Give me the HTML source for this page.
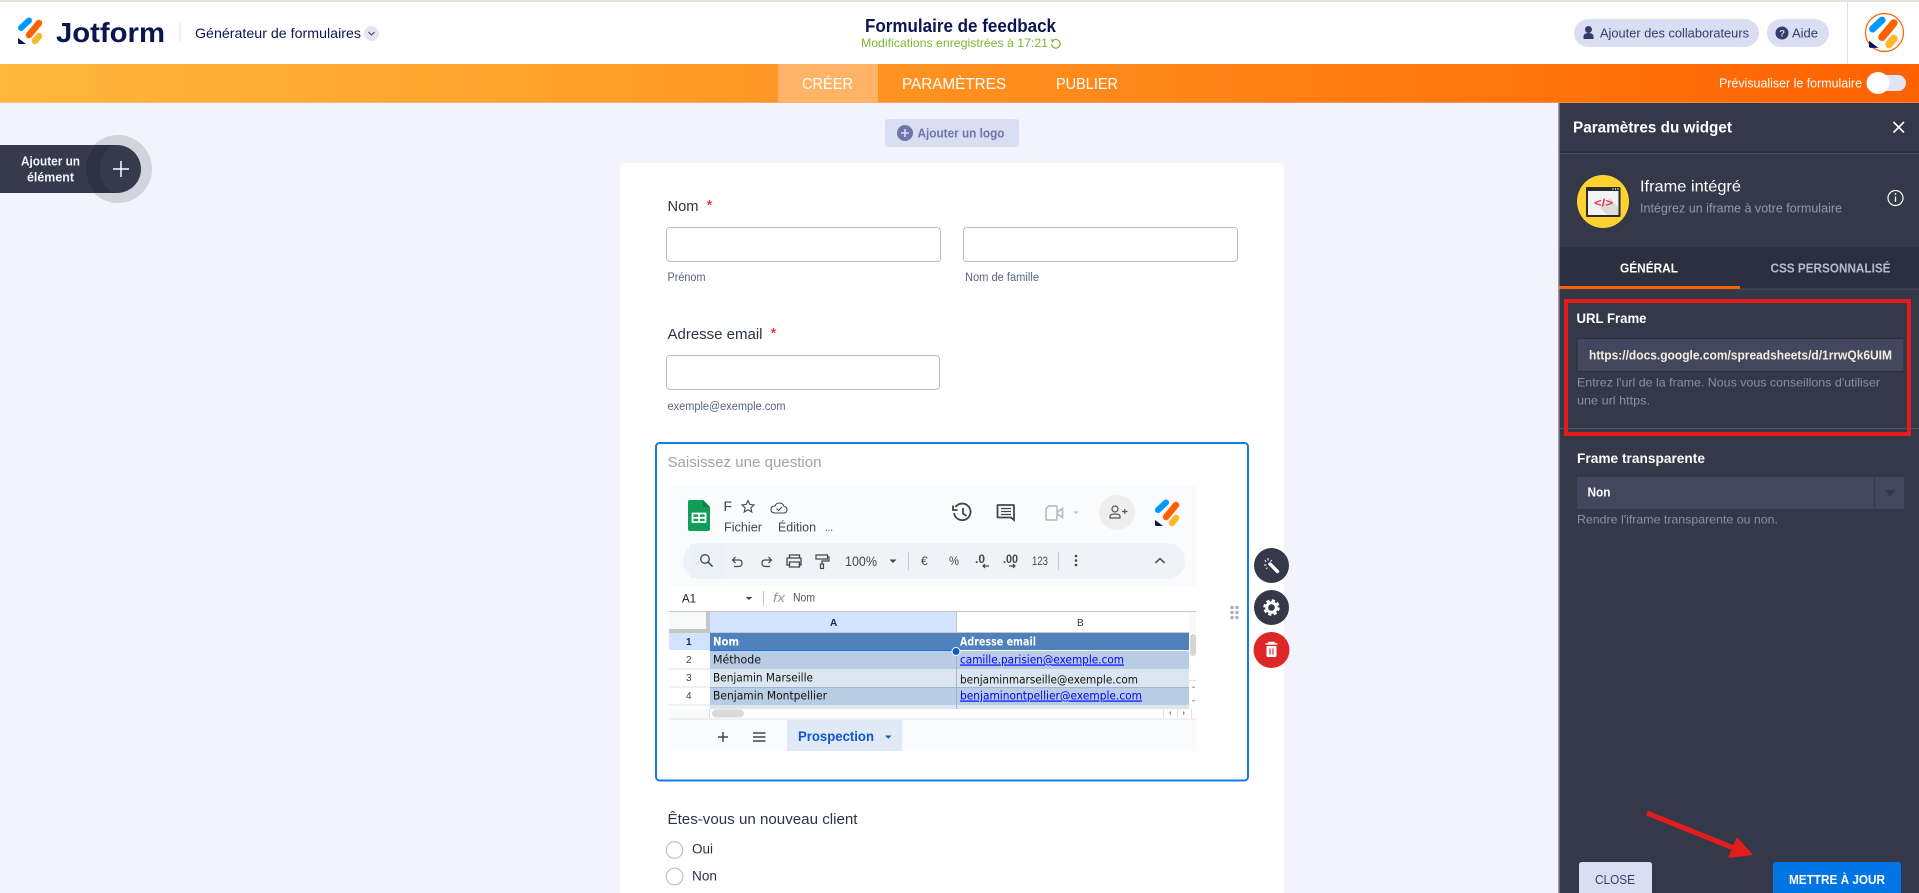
<!DOCTYPE html>
<html lang="fr">
<head>
<meta charset="utf-8">
<title>Formulaire de feedback</title>
<style>
html,body{margin:0;padding:0;width:1919px;height:893px;overflow:hidden;background:#f3f3fe}
svg{display:block;position:absolute;left:0;top:0}
text{font-family:"Liberation Sans",sans-serif;white-space:pre}
text.c{font-family:"DejaVu Sans","Liberation Sans",sans-serif}
</style>
</head>
<body>
<svg width="1919" height="893" viewBox="0 0 1919 893" xmlns="http://www.w3.org/2000/svg">
<defs>
<linearGradient id="og" x1="0" y1="0" x2="1" y2="0">
<stop offset="0" stop-color="#ffb73e"/><stop offset=".5" stop-color="#ff9020"/><stop offset="1" stop-color="#ff6100"/>
</linearGradient>
<g id="logo" fill="none" stroke-linecap="round" stroke-width="6.500">
<path d="M3 11L11 3.500" stroke="#0099ff" stroke-width="6"/>
<path d="M11 18L21 6" stroke="#ff6100"/>
<path d="M17 24L21 19" stroke="#ffb629"/>
<path d="M0 21L8 27H1.500Q0 27 0 25.500Z" fill="#0a1551" stroke="none"/>
</g>
</defs>

<!-- page -->
<rect width="1919" height="893" fill="#f3f3fe"/>

<!-- header -->
<rect width="1919" height="64" fill="#fff"/>
<rect width="1919" height="2" fill="#e8e4dc"/>
<use href="#logo" x="18" y="17"/>
<text x="56" y="42" font-size="27.500" font-weight="700" fill="#0a1551" textLength="109" lengthAdjust="spacingAndGlyphs">Jotform</text>
<rect x="179.500" y="23" width="1" height="18" fill="#dadef3"/>
<text x="195" y="38" font-size="14" fill="#0a1551" textLength="166" lengthAdjust="spacingAndGlyphs">Générateur de formulaires</text>
<circle cx="371.500" cy="33.500" r="7.500" fill="#e3e5f5"/>
<path d="M368.500 32l3 3 3-3" fill="none" stroke="#343c6a" stroke-width="1"/>

<text x="865" y="32" font-size="18" font-weight="700" fill="#0a1551" textLength="191" lengthAdjust="spacingAndGlyphs">Formulaire de feedback</text>
<text x="861" y="47" font-size="12" fill="#7ab72d" textLength="187" lengthAdjust="spacingAndGlyphs">Modifications enregistrées à 17:21</text>
<path d="M1053 40.500a4.300 4.300 0 1 1-1.500 3.500M1051 39.500l2 1.200-1 2" fill="none" stroke="#7ab72d" stroke-width="1.200"/>

<rect x="1574" y="19" width="185" height="28" rx="14" fill="#dadef3"/>
<circle cx="1588.500" cy="29.500" r="3.500" fill="#343c6a"/>
<path d="M1583.500 39v-2.500q0-3.500 5-3.500t5 3.500V39z" fill="#343c6a"/>
<text x="1600" y="37.500" font-size="13" fill="#343c6a" textLength="149" lengthAdjust="spacingAndGlyphs">Ajouter des collaborateurs</text>
<rect x="1767" y="19" width="62" height="28" rx="14" fill="#dadef3"/>
<circle cx="1782" cy="33" r="6.500" fill="#343c6a"/>
<text x="1779.300" y="36.500" font-size="9.500" font-weight="700" fill="#dadef3">?</text>
<text x="1792" y="37.500" font-size="13" fill="#343c6a" textLength="26" lengthAdjust="spacingAndGlyphs">Aide</text>
<rect x="1847" y="2" width="1" height="62" fill="#dadef3"/>
<ellipse cx="1884.500" cy="32.500" rx="19" ry="19" fill="#fff" stroke="#ff6100" stroke-width="1.200"/>
<g transform="translate(1869 16) scale(1.180 1.180)"><use href="#logo"/></g>

<!-- nav -->
<rect y="64" width="1919" height="39" fill="url(#og)"/>
<rect y="102" width="1919" height="1" fill="#fff" opacity=".2"/>
<rect x="778" y="64" width="100" height="39" fill="#ffb366"/>
<text x="802" y="89" font-size="16" fill="#fff" textLength="51" lengthAdjust="spacingAndGlyphs">CRÉER</text>
<text x="902" y="89" font-size="16" fill="#fff" textLength="104" lengthAdjust="spacingAndGlyphs">PARAMÈTRES</text>
<text x="1056" y="89" font-size="16" fill="#fff" textLength="62" lengthAdjust="spacingAndGlyphs">PUBLIER</text>
<text x="1719" y="87.500" font-size="13" fill="#fff" textLength="143" lengthAdjust="spacingAndGlyphs">Prévisualiser le formulaire</text>
<rect x="1868" y="75" width="38" height="16" rx="8" fill="#e3e5f5"/>
<ellipse cx="1878" cy="83" rx="11.500" ry="11" fill="#fff"/>

<!-- add element -->
<circle cx="118" cy="169" r="34" fill="#d2d3dc"/>
<path d="M0 145H117a24 24 0 0 1 24 24v0a24 24 0 0 1-24 24H0z" fill="#363a4d"/>
<path d="M96 145A34 34 0 0 0 96 193H117A17 24 0 0 1 117 145z" fill="#2f3242"/>
<text x="21" y="165.500" font-size="12.500" font-weight="700" fill="#f3f3fe" textLength="59" lengthAdjust="spacingAndGlyphs">Ajouter un</text>
<text x="27" y="181.500" font-size="12.500" font-weight="700" fill="#f3f3fe" textLength="47" lengthAdjust="spacingAndGlyphs">élément</text>
<path d="M121 161v16M113 169h16" stroke="#fff" stroke-width="1.500"/>

<!-- add logo -->
<rect x="885" y="119" width="134" height="28" rx="3" fill="#dadef3"/>
<circle cx="905" cy="133" r="8" fill="#6f76a7"/>
<path d="M905 129v8M901 133h8" stroke="#dadef3" stroke-width="1.600"/>
<text x="917.500" y="137.500" font-size="13" font-weight="700" fill="#6f76a7" textLength="87" lengthAdjust="spacingAndGlyphs">Ajouter un logo</text>

<!-- form card -->
<path d="M620 893V167q0-4 4-4H1280q4 0 4 4V893z" fill="#fff"/>
<text x="667.500" y="211" font-size="15" fill="#2c3345" textLength="31" lengthAdjust="spacingAndGlyphs">Nom</text>
<text x="706.500" y="210" font-size="15" fill="#f00">*</text>
<rect x="666.500" y="227.500" width="274" height="34" rx="3.500" fill="#fff" stroke="#b8bdc9"/>
<rect x="963.500" y="227.500" width="274" height="34" rx="3.500" fill="#fff" stroke="#b8bdc9"/>
<text x="667.500" y="281" font-size="11.500" fill="#57647e" textLength="38" lengthAdjust="spacingAndGlyphs">Prénom</text>
<text x="965" y="281" font-size="11.500" fill="#57647e" textLength="74" lengthAdjust="spacingAndGlyphs">Nom de famille</text>
<text x="667.500" y="339" font-size="15" fill="#2c3345" textLength="95" lengthAdjust="spacingAndGlyphs">Adresse email</text>
<text x="770.500" y="338" font-size="15" fill="#f00">*</text>
<rect x="666.500" y="355.500" width="273" height="34" rx="3.500" fill="#fff" stroke="#b8bdc9"/>
<text x="667.500" y="410" font-size="11.500" fill="#57647e" textLength="118" lengthAdjust="spacingAndGlyphs">exemple@exemple.com</text>

<!-- selected widget -->
<rect x="656" y="443" width="592" height="337.500" rx="3.500" fill="#fff" stroke="#0f7fe8" stroke-width="2"/>
<text x="667.500" y="467" font-size="15" fill="#a0a3ad" textLength="154" lengthAdjust="spacingAndGlyphs">Saisissez une question</text>

<!-- embedded sheet -->
<rect x="669" y="486" width="527" height="100" fill="#f9fbfd"/>
<path d="M690 500h13l7 7v22q0 2-2 2h-18q-2 0-2-2v-27q0-2 2-2z" fill="#0f9d58"/>
<path d="M703 500l7 7h-7z" fill="#0a7d45"/>
<path d="M692.500 513.500h13v8.500h-13zM699 513.500v8.500M692.500 517.800h13" fill="none" stroke="#fff" stroke-width="1.800"/>
<text x="723.500" y="511" font-size="14" fill="#444746">F</text>
<path d="M748 500.500l1.800 3.900 4.200.5-3.100 2.900.9 4.200-3.800-2.200-3.800 2.200.9-4.200-3.100-2.900 4.200-.5z" fill="none" stroke="#444746" stroke-width="1.100"/>
<path d="M775 513q-4 0-4-3.500t4-3.500q1-3 4.500-3t4.500 3.500q3 .5 3 3.200t-3 3.300z" fill="none" stroke="#444746" stroke-width="1.100"/>
<path d="M776.500 508.500l2 2 3.500-3.500" fill="none" stroke="#444746" stroke-width="1"/>
<text x="724" y="531.500" font-size="13" fill="#444746" textLength="38" lengthAdjust="spacingAndGlyphs">Fichier</text>
<text x="778" y="531.500" font-size="13" fill="#444746" textLength="38" lengthAdjust="spacingAndGlyphs">Édition</text>
<text x="825" y="531" font-size="12" fill="#444746" textLength="8" lengthAdjust="spacingAndGlyphs">...</text>

<path d="M955.500 507a8.300 8.300 0 1 1-1.500 6" fill="none" stroke="#444746" stroke-width="1.800"/>
<path d="M953 505.500v4.500h4.500" fill="none" stroke="#444746" stroke-width="1.800"/>
<path d="M963 508v5.500l3.500 2.500" fill="none" stroke="#444746" stroke-width="1.800"/>
<path d="M998 505h15.500q.5 0 .5 .5V520l-3-2.500H998q-.5 0-.5-.5V505.500q0-.5 .5-.5z" fill="none" stroke="#444746" stroke-width="1.800"/>
<path d="M1001 508.500h10M1001 511.500h10M1001 514.500h10" stroke="#444746" stroke-width="1.200"/>
<path d="M1048.500 506h7.500q1 0 1 1v12q0 1-1 1H1047q-1 0-1-1v-10zM1057.500 512l5-3.500v9l-5-3.500" fill="none" stroke="#bdbdbd" stroke-width="1.700"/>
<path d="M1073.500 511.500h5l-2.500 2.500z" fill="#bdbdbd"/>
<ellipse cx="1117" cy="512.500" rx="18" ry="17.500" fill="#eeeeee"/>
<circle cx="1115" cy="509" r="3" fill="none" stroke="#555" stroke-width="1.200"/>
<path d="M1110 518v-1.500q0-2.500 5-2.500t5 2.500v1.500z" fill="none" stroke="#555" stroke-width="1.200"/>
<path d="M1122 511.500h5.500M1124.800 509v5" stroke="#555" stroke-width="1.200"/>
<use href="#logo" x="1155" y="499"/>

<rect x="683" y="543" width="502" height="36" rx="18" fill="#eff2f8"/>
<rect x="690" y="544" width="34" height="34" fill="#ecf0f8"/>
<circle cx="705" cy="559" r="4.300" fill="none" stroke="#444746" stroke-width="1.300"/>
<path d="M708 562l4.500 4.500" stroke="#444746" stroke-width="1.500"/>
<path d="M733 560h6q3 0 3 3t-3 3.500h-5M735.500 557l-3 3 3 3" fill="none" stroke="#444746" stroke-width="1.200"/>
<path d="M771 560h-6q-3 0-3 3t3 3.500h5M768.500 557l3 3-3 3" fill="none" stroke="#444746" stroke-width="1.200"/>
<path d="M789.500 558v-3h10v3M789.500 565h-2.500v-6.500q0-.5.5-.5h13q.5 0 .5.5v6.500h-2.500M789.500 562h10v5h-10z" fill="none" stroke="#444746" stroke-width="1.300"/>
<path d="M816 555h11.500v4H816zM827.500 557h1.500v4h-7v3" fill="none" stroke="#444746" stroke-width="1.200"/>
<rect x="820.500" y="564" width="3" height="4.500" fill="none" stroke="#444746" stroke-width="1.200"/>
<text x="845" y="566" font-size="13.500" fill="#444746" textLength="32" lengthAdjust="spacingAndGlyphs">100%</text>
<path d="M889.500 559.500h7l-3.500 3.500z" fill="#444746"/>
<rect x="908" y="552" width="1" height="18" fill="#c7c9cc"/>
<text x="921" y="565" font-size="12" fill="#444746">€</text>
<text x="949" y="565" font-size="12" fill="#444746" textLength="10" lengthAdjust="spacingAndGlyphs">%</text>
<text x="975" y="563" font-size="11.500" font-weight="700" fill="#444746" textLength="10" lengthAdjust="spacingAndGlyphs">.0</text>
<path d="M989 566h-6M985 564l-2 2 2 2" fill="none" stroke="#444746" stroke-width="1.200"/>
<text x="1003" y="563" font-size="11.500" font-weight="700" fill="#444746" textLength="15" lengthAdjust="spacingAndGlyphs">.00</text>
<path d="M1009 566h6M1013 564l2 2-2 2" fill="none" stroke="#444746" stroke-width="1.200"/>
<text x="1032" y="565" font-size="11.500" fill="#444746" textLength="16" lengthAdjust="spacingAndGlyphs">123</text>
<rect x="1058" y="552" width="1" height="18" fill="#c7c9cc"/>
<circle cx="1076" cy="556" r="1.300" fill="#444746"/><circle cx="1076" cy="560.500" r="1.300" fill="#444746"/><circle cx="1076" cy="565" r="1.300" fill="#444746"/>
<path d="M1155.500 563l4.500-4.500 4.500 4.500" fill="none" stroke="#444746" stroke-width="1.500"/>

<text x="682" y="602.500" font-size="11.500" fill="#1f1f1f">A1</text>
<path d="M745.500 597h7l-3.500 3z" fill="#444746"/>
<rect x="763" y="591" width="1" height="15" fill="#c7c7c7"/>
<text x="773" y="602" font-size="13" font-style="italic" fill="#9a9a9a" textLength="12" lengthAdjust="spacingAndGlyphs">fx</text>
<text x="793" y="601.500" font-size="12" fill="#555" textLength="22" lengthAdjust="spacingAndGlyphs">Nom</text>

<!-- grid -->
<rect x="669" y="611" width="527" height="1" fill="#c4c7c5"/>
<rect x="669" y="612" width="37" height="17" fill="#f8f9fa"/>
<rect x="706" y="612" width="4" height="21" fill="#c4c7c5"/>
<rect x="669" y="629" width="41" height="4" fill="#c4c7c5"/>
<rect x="710" y="612" width="246" height="21" fill="#d3e3fd"/>
<rect x="956" y="612" width="1" height="21" fill="#c4c7c5"/>
<rect x="957" y="612" width="232" height="21" fill="#fff"/>
<rect x="1189" y="612" width="7" height="21" fill="#f8f9fa"/>
<rect x="710" y="632" width="479" height="1" fill="#c4c7c5"/>
<text x="830" y="626" font-size="10" font-weight="700" fill="#0b2a66">A</text>
<text x="1077" y="626" font-size="10" fill="#333">B</text>

<rect x="669" y="633" width="41" height="17" fill="#d3e3fd"/>
<text x="686" y="645" font-size="10" font-weight="700" fill="#0b2a66">1</text>
<rect x="710" y="633" width="479" height="17" fill="#4f81bd"/>
<text class="c" x="713" y="645.500" font-size="11.500" font-weight="700" fill="#fff" textLength="26" lengthAdjust="spacingAndGlyphs">Nom</text>
<text class="c" x="960" y="645.500" font-size="11.500" font-weight="700" fill="#fff" textLength="76" lengthAdjust="spacingAndGlyphs">Adresse email</text>
<rect x="710" y="650" width="246" height="1" fill="#1a73e8"/>

<rect x="710" y="651" width="479" height="18" fill="#b8cce4"/>
<rect x="710" y="669" width="479" height="18" fill="#dce6f1"/>
<rect x="710" y="687" width="479" height="18" fill="#b8cce4"/>
<rect x="710" y="705" width="479" height="4" fill="#dce6f1"/>
<rect x="710" y="687" width="479" height="1" fill="#9fb6d4"/>
<rect x="956" y="651" width="1" height="58" fill="#9fb6d4"/>
<rect x="669" y="668.500" width="41" height="1" fill="#e0e0e0"/>
<rect x="669" y="686.500" width="41" height="1" fill="#e0e0e0"/>
<rect x="669" y="704.500" width="41" height="1" fill="#e0e0e0"/>
<text x="686" y="663" font-size="10" fill="#444">2</text>
<text x="686" y="681" font-size="10" fill="#444">3</text>
<text x="686" y="699" font-size="10" fill="#444">4</text>
<text class="c" x="713" y="663.500" font-size="11.500" fill="#111" textLength="48" lengthAdjust="spacingAndGlyphs">Méthode</text>
<text class="c" x="960" y="663.500" font-size="11.500" fill="#0000ff" text-decoration="underline" textLength="164" lengthAdjust="spacingAndGlyphs">camille.parisien@exemple.com</text>
<text class="c" x="713" y="681.500" font-size="11.500" fill="#111" textLength="100" lengthAdjust="spacingAndGlyphs">Benjamin Marseille</text>
<text class="c" x="960" y="683.500" font-size="11.500" fill="#111" textLength="178" lengthAdjust="spacingAndGlyphs">benjaminmarseille@exemple.com</text>
<text class="c" x="713" y="699.500" font-size="11.500" fill="#111" textLength="114" lengthAdjust="spacingAndGlyphs">Benjamin Montpellier</text>
<text class="c" x="960" y="699.500" font-size="11.500" fill="#0000ff" text-decoration="underline" textLength="182" lengthAdjust="spacingAndGlyphs">benjaminontpellier@exemple.com</text>
<circle cx="956" cy="651.500" r="4" fill="#0b57d0" stroke="#fff" stroke-width="1"/>

<rect x="669" y="709" width="41" height="9" fill="#f8f9fa"/>
<rect x="709" y="709" width="1" height="9" fill="#ddd"/>
<rect x="712" y="709.500" width="32" height="8" rx="4" fill="#dadada"/>
<rect x="1190" y="634" width="6" height="22" rx="3" fill="#d6d6d6"/>
<rect x="1189" y="680" width="7" height="1" fill="#e0e0e0"/>
<path d="M1191.500 688l2-2 2 2zM1191.500 700l2 2 2-2z" fill="#aaa"/>
<rect x="1163" y="709" width="1" height="9" fill="#e0e0e0"/><rect x="1177" y="709" width="1" height="9" fill="#e0e0e0"/><rect x="1191" y="709" width="1" height="9" fill="#e0e0e0"/>
<path d="M1171 711v4l-2-2zM1183 711v4l2-2z" fill="#888"/>
<rect x="669" y="718.500" width="527" height="1" fill="#e1e3e1"/>
<rect x="669" y="719.500" width="527" height="31.500" fill="#f9fbfd"/>
<path d="M723 732v10M718 737h10" stroke="#444746" stroke-width="1.500"/>
<path d="M753 733h12.500M753 737h12.500M753 741h12.500" stroke="#444746" stroke-width="1.400"/>
<rect x="787" y="720" width="115" height="31" fill="#e1e9f7"/>
<text x="798" y="741" font-size="13.500" font-weight="700" fill="#0b57d0" textLength="76" lengthAdjust="spacingAndGlyphs">Prospection</text>
<path d="M885 735.500h6.500l-3.200 3.200z" fill="#0b57d0"/>

<!-- drag + float buttons -->
<g fill="#aab0c6"><circle cx="1232" cy="607.500" r="1.800"/><circle cx="1237" cy="607.500" r="1.800"/><circle cx="1232" cy="612.500" r="1.800"/><circle cx="1237" cy="612.500" r="1.800"/><circle cx="1232" cy="617.500" r="1.800"/><circle cx="1237" cy="617.500" r="1.800"/></g>
<circle cx="1271.500" cy="565.500" r="17.500" fill="#343849"/>
<path d="M1270 564l7.500 7.500" stroke="#fff" stroke-width="3.400" stroke-linecap="round"/>
<path d="M1265 560l1 2M1268 558v2.500M1272 560l-1.500 1.500M1264 565h2.500M1266 569l1.500-1.500" stroke="#dfe1ea" stroke-width="1.200"/>
<circle cx="1271.500" cy="607.500" r="17.500" fill="#343849"/>
<circle cx="1271.500" cy="607.500" r="4.800" fill="none" stroke="#fff" stroke-width="3"/>
<circle cx="1271.500" cy="607.500" r="7" fill="none" stroke="#fff" stroke-width="2.500" stroke-dasharray="3.200 2.300"/>
<circle cx="1271.500" cy="650" r="18" fill="#dd2726"/>
<path d="M1265.500 644h12M1269 644v-1.500h5v1.500" fill="none" stroke="#fff" stroke-width="1.600"/>
<path d="M1266.500 646h10v9.500q0 1.500-1.500 1.500h-7q-1.500 0-1.500-1.500z" fill="#fff"/>
<path d="M1270 648.500v6M1273 648.500v6" stroke="#dd2726" stroke-width="1.200"/>

<!-- bottom of form -->
<text x="667.500" y="824" font-size="15" fill="#2c3345" textLength="190" lengthAdjust="spacingAndGlyphs">Êtes-vous un nouveau client</text>
<circle cx="674.500" cy="850" r="8.300" fill="#fff" stroke="#b8bdc9" stroke-width="1.100"/>
<circle cx="674.500" cy="876.500" r="8.300" fill="#fff" stroke="#b8bdc9" stroke-width="1.100"/>
<text x="692" y="853.500" font-size="13.500" fill="#2c3345" textLength="21" lengthAdjust="spacingAndGlyphs">Oui</text>
<text x="692" y="880.500" font-size="13.500" fill="#2c3345" textLength="25" lengthAdjust="spacingAndGlyphs">Non</text>

<!-- panel -->
<rect x="1558" y="103" width="361" height="790" fill="#343849"/>
<rect x="1558" y="103" width="1.500" height="790" fill="#9a9cab"/>
<text x="1573" y="132.500" font-size="16" font-weight="700" fill="#fff" textLength="159" lengthAdjust="spacingAndGlyphs">Paramètres du widget</text>
<path d="M1893.500 122l10.500 10.500M1904 122L1893.500 132.500" stroke="#fff" stroke-width="1.600"/>
<rect x="1559.500" y="151" width="359.500" height="2" fill="#2c2f3f"/>
<rect x="1559.500" y="153" width="359.500" height="1" fill="#4a4e5f"/>

<ellipse cx="1603" cy="201.500" rx="26" ry="26.500" fill="#ffd22f"/>
<path d="M1600 215l19 -23v24l-5 1z" fill="#e8c226" opacity=".8"/>
<rect x="1586" y="187" width="34.500" height="30" rx="1" fill="#2b2b2b"/>
<rect x="1588" y="191" width="30.500" height="24" fill="#f3f3f3"/>
<path d="M1600 208L1610 198l8.500 10v7h-11z" fill="#dcdcdc"/>
<circle cx="1613" cy="189" r=".7" fill="#fff"/><circle cx="1615.500" cy="189" r=".7" fill="#fff"/><circle cx="1618" cy="189" r=".7" fill="#fff"/>
<text x="1594" y="206.500" font-size="11" font-weight="700" fill="#ee2b3b" textLength="19" lengthAdjust="spacingAndGlyphs">&lt;/&gt;</text>
<text x="1640" y="191.500" font-size="16" fill="#fff" textLength="101" lengthAdjust="spacingAndGlyphs">Iframe intégré</text>
<text x="1640" y="212.500" font-size="12.500" fill="#9298b3" textLength="202" lengthAdjust="spacingAndGlyphs">Intégrez un iframe à votre formulaire</text>
<circle cx="1895.500" cy="198" r="7.500" fill="none" stroke="#fff" stroke-width="1.200"/>
<path d="M1895.500 196.500v5.500" stroke="#fff" stroke-width="1.300"/>
<circle cx="1895.500" cy="194" r=".9" fill="#fff"/>

<rect x="1559.500" y="247" width="359.500" height="42" fill="#2c2f3f"/>
<rect x="1559.500" y="286" width="180.500" height="3" fill="#ff6100"/>
<rect x="1740" y="288.500" width="179" height="1" fill="#4a4e5f"/>
<text x="1620" y="272.500" font-size="13" font-weight="700" fill="#fff" textLength="58" lengthAdjust="spacingAndGlyphs">GÉNÉRAL</text>
<text x="1770.500" y="272.500" font-size="13" font-weight="700" fill="#b6bbcf" textLength="120" lengthAdjust="spacingAndGlyphs">CSS PERSONNALISÉ</text>

<text x="1576.500" y="323" font-size="14" font-weight="700" fill="#fff" textLength="70" lengthAdjust="spacingAndGlyphs">URL Frame</text>
<rect x="1577" y="338.500" width="327" height="33" rx="1" fill="#43475e" stroke="#2c2f3f"/>
<text x="1589" y="359.500" font-size="12.500" font-weight="700" fill="#f4eedd" textLength="303" lengthAdjust="spacingAndGlyphs">https://docs.google.com/spreadsheets/d/1rrwQk6UIM</text>
<text x="1577" y="386.500" font-size="12" fill="#8a90a5" textLength="303" lengthAdjust="spacingAndGlyphs">Entrez l'url de la frame. Nous vous conseillons d'utiliser</text>
<text x="1577" y="404.500" font-size="12" fill="#8a90a5" textLength="73" lengthAdjust="spacingAndGlyphs">une url https.</text>
<rect x="1559.500" y="428" width="359.500" height="1" fill="#4f5362"/>
<rect x="1566" y="301" width="343" height="133" fill="none" stroke="#e31c1c" stroke-width="4"/>

<text x="1577" y="463" font-size="14" font-weight="700" fill="#fff" textLength="128" lengthAdjust="spacingAndGlyphs">Frame transparente</text>
<rect x="1577" y="477" width="327" height="32" fill="#43475e"/>
<rect x="1874" y="477" width="1" height="32" fill="#343849"/>
<text x="1587.500" y="496.500" font-size="12.500" font-weight="700" fill="#fff" textLength="23" lengthAdjust="spacingAndGlyphs">Non</text>
<path d="M1885 490h10l-5 7z" fill="#343849"/>
<text x="1577" y="523.500" font-size="12" fill="#8a90a5" textLength="201" lengthAdjust="spacingAndGlyphs">Rendre l'iframe transparente ou non.</text>

<!-- arrow -->
<path d="M1647 813L1736 849" stroke="#e31c1c" stroke-width="5"/>
<path d="M1737 837L1753 855L1728 858z" fill="#e31c1c"/>

<!-- footer buttons -->
<path d="M1579 893V865q0-3 3-3H1649q3 0 3 3V893z" fill="#dadef3"/>
<text x="1595" y="884" font-size="13" fill="#343c6a" textLength="40" lengthAdjust="spacingAndGlyphs">CLOSE</text>
<path d="M1773 893V865q0-3 3-3H1898q3 0 3 3V893z" fill="#0075e3"/>
<text x="1789" y="884" font-size="13" font-weight="700" fill="#fff" textLength="96" lengthAdjust="spacingAndGlyphs">METTRE À JOUR</text>
</svg>
</body>
</html>
